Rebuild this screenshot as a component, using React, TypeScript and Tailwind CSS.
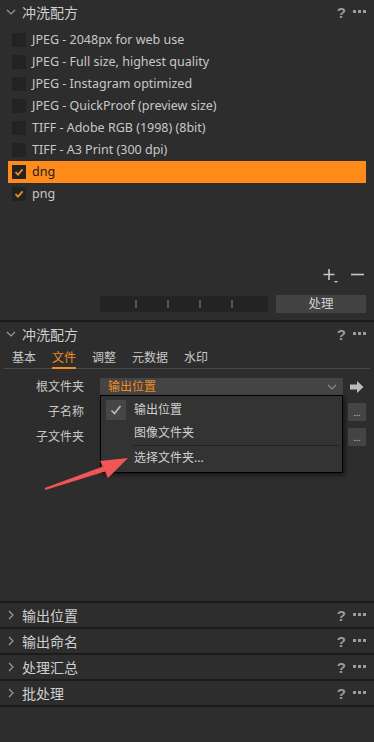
import React from 'react';

const presets = [
  { name: 'JPEG - 2048px for web use', checked: false },
  { name: 'JPEG - Full size, highest quality', checked: false },
  { name: 'JPEG - Instagram optimized', checked: false },
  { name: 'JPEG - QuickProof (preview size)', checked: false },
  { name: 'TIFF - Adobe RGB (1998) (8bit)', checked: false },
  { name: 'TIFF - A3 Print (300 dpi)', checked: false },
  { name: 'dng', checked: true, active: true },
  { name: 'png', checked: true },
];

const tabs = ['基本', '文件', '调整', '元数据', '水印'];

function Chevron({ open }: { open: boolean }) {
  return open ? (
    <svg width="10" height="10" viewBox="0 0 10 10" className="shrink-0">
      <path d="M1 3 L5 7 L9 3" fill="none" stroke="#9a9a9a" strokeWidth="1.2" />
    </svg>
  ) : (
    <svg width="10" height="10" viewBox="0 0 10 10" className="shrink-0">
      <path d="M3 1 L7 5 L3 9" fill="none" stroke="#9a9a9a" strokeWidth="1.2" />
    </svg>
  );
}

function HeaderTools() {
  return (
    <div className="ml-auto flex items-center gap-[7px] pr-[8px]">
      <span className="text-[15px] font-bold text-[#9c9c9c] leading-none" style={{ fontFamily: 'Arial, sans-serif' }}>?</span>
      <svg width="13" height="4" viewBox="0 0 13 4">
        <rect x="0" y="0" width="3" height="3" fill="#9c9c9c" />
        <rect x="5" y="0" width="3" height="3" fill="#9c9c9c" />
        <rect x="10" y="0" width="3" height="3" fill="#9c9c9c" />
      </svg>
    </div>
  );
}

function SectionHeader({ title, open }: { title: string; open: boolean }) {
  return (
    <div className="h-[24px] flex items-center pl-[6px] shrink-0">
      <Chevron open={open} />
      <span className="ml-[6px] text-[14px] text-[#cfcfcf]">{title}</span>
      <HeaderTools />
    </div>
  );
}

function Check({ color }: { color: string }) {
  return (
    <svg width="10" height="10" viewBox="0 0 10 10">
      <path d="M1.5 5.2 L4 7.6 L8.6 2.4" fill="none" stroke={color} strokeWidth="1.8" />
    </svg>
  );
}

export default function App() {
  return (
    <div
      className="w-[374px] h-[742px] bg-[#2d2d2d] flex flex-col overflow-hidden relative"
      style={{ fontFamily: '"Noto Sans", "Noto Sans CJK SC", sans-serif' }}
    >
      {/* Recipe list section */}
      <div className="h-[320px] flex flex-col shrink-0">
        <SectionHeader title="冲洗配方" open />
        <div className="mt-[5px] flex flex-col">
          {presets.map((p) => (
            <div
              key={p.name}
              className={`h-[22px] mx-[8px] flex items-center pl-[4px] ${p.active ? 'bg-[#ff8c1a]' : ''}`}
            >
              <div className="w-[14px] h-[14px] bg-[#232323] flex items-center justify-center">
                {p.checked && <Check color="#f28b23" />}
              </div>
              <span className={`ml-[6px] text-[12.5px] ${p.active ? 'text-[#1a1a1a]' : 'text-[#c8c8c8]'}`}>{p.name}</span>
            </div>
          ))}
        </div>
        <div className="flex-1" />
        <div className="flex items-center justify-end gap-[12px] pr-[10px] h-[16px]">
          <svg width="16" height="16" viewBox="0 0 16 16">
            <path d="M6 1 V12 M0.5 6.5 H11.5" stroke="#c8c8c8" strokeWidth="1.6" />
            <path d="M11 13 L15 13 L13 15 Z" fill="#c8c8c8" />
          </svg>
          <svg width="13" height="16" viewBox="0 0 13 16">
            <path d="M0 6.5 H13" stroke="#c8c8c8" strokeWidth="1.6" />
          </svg>
        </div>
        <div className="mt-[11px] mb-[7px] flex items-center pl-[100px] pr-[8px] gap-[8px]">
          <div className="w-[168px] h-[16px] bg-[#232323] flex items-center justify-around px-[20px]">
            <div className="w-[2px] h-[8px] bg-[#555]" />
            <div className="w-[2px] h-[8px] bg-[#555]" />
            <div className="w-[2px] h-[8px] bg-[#555]" />
            <div className="w-[2px] h-[8px] bg-[#555]" />
          </div>
          <div className="flex-1 h-[18px] bg-[#434343] flex items-center justify-center text-[12.5px] text-[#d0d0d0]">
            处理
          </div>
        </div>
      </div>
      <div className="h-[2px] bg-[#1b1b1b] shrink-0" />

      {/* Recipe detail section */}
      <div className="h-[279px] flex flex-col shrink-0 relative">
        <SectionHeader title="冲洗配方" open />
        <div className="mx-[4px] mt-[3px] flex items-end border-b border-[#4a4a4a] h-[20px]">
          {tabs.map((t, i) => (
            <div
              key={t}
              className={`h-[20px] flex items-center text-[12px] ${i === 0 ? 'ml-[8px]' : 'ml-[16px]'} ${i === 1 ? 'text-[#f28b23] border-b-2 border-[#f28b23] -mb-[1px]' : 'text-[#c8c8c8]'}`}
            >
              {t}
            </div>
          ))}
        </div>

        <div className="mt-[9px] flex flex-col gap-[7px]">
          <div className="flex items-center h-[18px]">
            <div className="w-[84px] text-right text-[12px] text-[#c8c8c8]">根文件夹</div>
            <div className="ml-[16px] w-[243px] h-[18px] bg-[#444444] flex items-center pl-[8px] pr-[6px]">
              <span className="text-[12px] text-[#f28b23]">输出位置</span>
              <svg width="10" height="6" viewBox="0 0 10 6" className="ml-auto">
                <path d="M1 1 L5 5 L9 1" fill="none" stroke="#8a8a8a" strokeWidth="1.2" />
              </svg>
            </div>
            <svg width="14" height="12" viewBox="0 0 14 12" className="ml-[7px]">
              <path d="M0 3.5 H7 V0 L13.5 6 L7 12 V8.5 H0 Z" fill="#bdbdbd" />
            </svg>
          </div>
          <div className="flex items-center h-[18px]">
            <div className="w-[84px] text-right text-[12px] text-[#c8c8c8]">子名称</div>
            <div className="ml-auto mr-[8px] w-[18px] h-[18px] bg-[#444444] flex items-end justify-center pb-[4px] text-[9px] text-[#c8c8c8] leading-none">...</div>
          </div>
          <div className="flex items-center h-[18px]">
            <div className="w-[84px] text-right text-[12px] text-[#c8c8c8]">子文件夹</div>
            <div className="ml-auto mr-[8px] w-[18px] h-[18px] bg-[#444444] flex items-end justify-center pb-[4px] text-[9px] text-[#c8c8c8] leading-none">...</div>
          </div>
        </div>

        {/* Dropdown menu */}
        <div className="absolute left-[100px] top-[73px] w-[243px] h-[78px] bg-[#333333] border border-black shadow-[2px_2px_4px_rgba(0,0,0,0.5)] flex flex-col pt-[3px]">
          <div className="h-[22px] flex items-center">
            <div className="ml-[5px] w-[20px] h-[20px] bg-[#464646] flex items-center justify-center">
              <svg width="12" height="12" viewBox="0 0 12 12">
                <path d="M1.5 6.5 L4.5 9.5 L10.5 2" fill="none" stroke="#bdbdbd" strokeWidth="1.6" />
              </svg>
            </div>
            <span className="ml-[8px] text-[12px] text-[#d0d0d0]">输出位置</span>
          </div>
          <div className="h-[24px] flex items-center">
            <span className="ml-[33px] text-[12px] text-[#d0d0d0]">图像文件夹</span>
          </div>
          <div className="mx-[32px] mr-[3px] h-[1px] bg-[#222]" />
          <div className="h-[24px] flex items-center">
            <span className="ml-[33px] text-[12px] text-[#d0d0d0]">选择文件夹...</span>
          </div>
        </div>

        {/* Red annotation arrow */}
        <svg className="absolute left-[40px] top-[128px]" width="100" height="50" viewBox="0 0 100 50">
          <path d="M4.7 38 L63 16.5 L60 11 L88 8 L68 28 L65 21.5 L5.3 40 Z" fill="#f25556" />
        </svg>
      </div>

      {/* Collapsed sections */}
      {['输出位置', '输出命名', '处理汇总', '批处理'].map((t) => (
        <div key={t} className="flex flex-col shrink-0">
          <div className="h-[2px] bg-[#1b1b1b]" />
          <SectionHeader title={t} open={false} />
        </div>
      ))}
      <div className="h-[2px] bg-[#1b1b1b] shrink-0" />
      <div className="flex-1" />
    </div>
  );
}
